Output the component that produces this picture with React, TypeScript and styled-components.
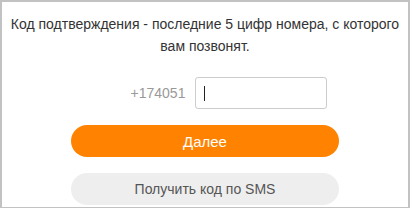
import styled, { createGlobalStyle } from 'styled-components'

const Global = createGlobalStyle`
	html, body {
		margin: 0;
		padding: 0;
		background: #fff;
	}
	body {
		font-family: "Liberation Sans", Arial, sans-serif;
	}
`

const Frame = styled.div`
	box-sizing: border-box;
	width: 410px;
	height: 208px;
	border: 2px solid #c2c2c2;
	border-bottom-width: 1px;
	background: #fff;
	display: flex;
	flex-direction: column;
	align-items: center;
	padding-top: 11px;
	overflow: hidden;
`

const Hint = styled.p`
	margin: 0;
	width: 402px;
	font-size: 14px;
	line-height: 22px;
	color: #333;
	text-align: center;
`

const PhoneRow = styled.div`
	display: flex;
	align-items: center;
	gap: 10px;
	margin-top: 20px;
	margin-left: 48px;
`

const Prefix = styled.span`
	font-size: 14px;
	color: #999;
`

const CodeInput = styled.div`
	box-sizing: border-box;
	width: 132px;
	height: 32px;
	border: 1px solid #ccc;
	border-radius: 3px;
	display: flex;
	align-items: center;
	padding-left: 8px;
`

const Caret = styled.span`
	width: 1px;
	height: 15px;
	background: #222;
`

const Button = styled.div<{ $primary?: boolean }>`
	box-sizing: border-box;
	width: 268px;
	height: 32px;
	border-radius: 16px;
	display: flex;
	align-items: center;
	justify-content: center;
	font-size: ${({ $primary }) => ($primary ? '15px' : '14px')};
	background: ${({ $primary }) => ($primary ? '#ff8300' : '#eeeeee')};
	color: ${({ $primary }) => ($primary ? '#fff' : '#555')};
	margin-top: 16px;
	flex-shrink: 0;
`

export default function App() {
	return (
		<>
			<Global />
			<Frame>
				<Hint>Код подтверждения - последние 5 цифр номера, с которого вам позвонят.</Hint>
				<PhoneRow>
					<Prefix>+174051</Prefix>
					<CodeInput>
						<Caret />
					</CodeInput>
				</PhoneRow>
				<Button $primary>Далее</Button>
				<Button>Получить код по SMS</Button>
			</Frame>
		</>
	)
}
